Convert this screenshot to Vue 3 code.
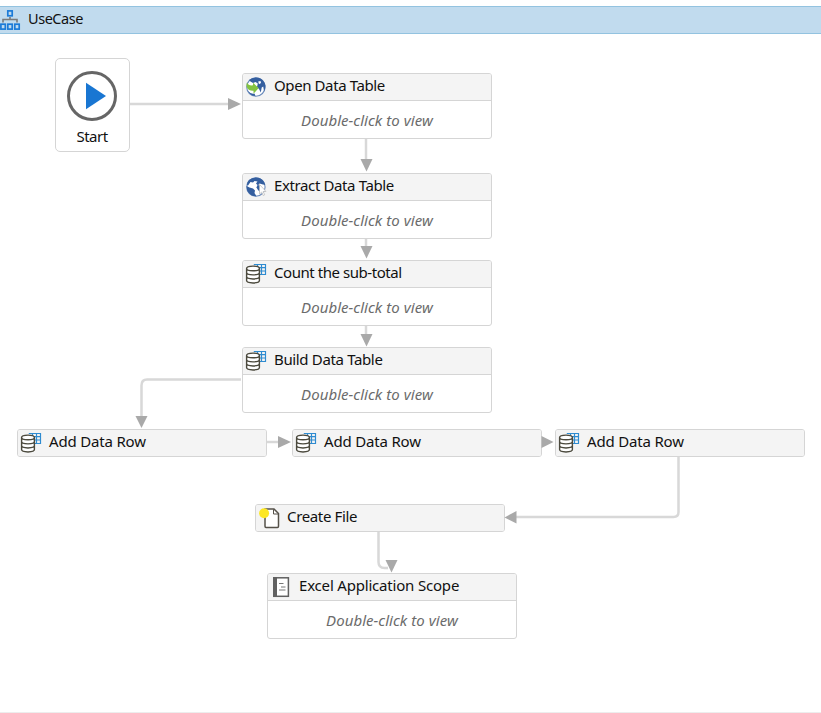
<script setup>
const nodes = [
  { id: 1, title: 'Open Data Table', icon: 'open', x: 242, y: 73, body: true, ls: -0.4 },
  { id: 2, title: 'Extract Data Table', icon: 'extract', x: 242, y: 173, body: true, ls: -0.38 },
  { id: 3, title: 'Count the sub-total', icon: 'table', x: 242, y: 260, body: true, ls: -0.45 },
  { id: 4, title: 'Build Data Table', icon: 'table', x: 242, y: 347, body: true, ls: -0.35 },
  { id: 5, title: 'Add Data Row', icon: 'table', x: 17, y: 429, ls: -0.18 },
  { id: 6, title: 'Add Data Row', icon: 'table', x: 292, y: 429, ls: -0.18 },
  { id: 7, title: 'Add Data Row', icon: 'table', x: 555, y: 429, ls: -0.18 },
  { id: 8, title: 'Create File', icon: 'file', x: 255, y: 504, ls: -0.35 },
  { id: 9, title: 'Excel Application Scope', icon: 'excel', x: 267, y: 573, body: true, ls: -0.19 },
]
const lines = [
  'M130 104H230',
  'M366 139V160',
  'M366 239V248',
  'M366 326V336',
  'M241 379.500H147Q141.500 379.500 141.500 385.500V417',
  'M267 442H279',
  'M678.500 457V512Q678.500 517 673.500 517H516',
  'M378.500 532V562Q378.500 568 384.500 568H388',
]
const arrows = [
  'M228 98L241 104L228 110Z',
  'M360.500 159H372.500L366.500 171.500Z',
  'M360.500 246H372.500L366.500 258.500Z',
  'M360.500 334H372.500L366.500 346.500Z',
  'M135.500 416H147.500L141.500 428Z',
  'M278 436L291 442L278 448Z',
  'M541.500 436L553.500 442L541.500 448Z',
  'M516.500 511V523.500L504.500 517.500Z',
  'M385.500 560H397.500L391.500 572.500Z',
]
</script>

<template>
  <div class="page">
    <header class="titlebar">
      <svg class="tree" width="21" height="22" viewBox="0 0 21 22" fill="none">
        <path d="M10 8V10.500M3 13.500V10.500H17V13.500" stroke="#7a7a7a" stroke-width="1.600" />
        <g stroke="#1c7bd8" stroke-width="1.700">
          <rect x="7.800" y="1.900" width="4.400" height="4.900" />
          <rect x=".9" y="15.200" width="4.400" height="4.900" />
          <rect x="7.800" y="15.200" width="4.400" height="4.900" />
          <rect x="14.800" y="15.200" width="4.400" height="4.900" />
        </g>
      </svg>
      <span>UseCase</span>
    </header>

    <main class="canvas">
      <svg class="links" width="821" height="713" viewBox="0 0 821 713">
        <path v-for="d in lines" :key="d" :d="d" class="line" />
      </svg>

      <div class="start">
        <svg width="50" height="50" viewBox="0 0 50 50">
          <circle cx="25" cy="25" r="23.500" fill="#fff" stroke="#666" stroke-width="3" />
          <path d="M19 11.700V38.300L39 25Z" fill="#1976d2" />
        </svg>
        <span>Start</span>
      </div>

      <section
        v-for="n in nodes"
        :key="n.id"
        class="node"
        :style="{ left: n.x + 'px', top: n.y + 'px' }"
      >
        <div class="head" :class="{ divided: n.body }">
          <svg class="icon" width="22" height="22" viewBox="0 0 22 22" fill="none">
            <template v-if="n.icon === 'open'">
              <circle cx="10.900" cy="11" r="9.200" fill="#fff" stroke="#6c8cbc" stroke-width="1.100" />
              <path d="M4 4Q8 .6 13.500 1.800Q19 3.500 20.500 9.500Q20.500 13 19 15L18.200 10.500L16.700 11.500L15.800 16.500L14 13L12 11L12.800 7.500L10.500 6L8 7L5.500 5.500Z" fill="#355f9f" />
              <path d="M13.200 5.500L15.500 5L16 7L14 8.300Z" fill="#fff" />
              <path d="M3 15Q6 18.500 9.500 17.500L10.500 20Q5.500 20 3 15Z" fill="#355f9f" />
              <path d="M2 6.500Q3.500 10 8 9.300V6.800L13.700 12L8.500 17.800V14.800Q3 15 1.600 10.500Q1.300 8 2 6.500Z" fill="#83c341" />
            </template>
            <template v-else-if="n.icon === 'extract'">
              <circle cx="10.900" cy="11" r="9.200" fill="#fff" stroke="#6c8cbc" stroke-width="1.100" />
              <path d="M4 4Q8 .6 13.500 1.800Q19 3.500 20.300 9L18 8.500L14.500 7.500L13 9.500L11 7.500L12.500 5.500L9.500 5L8 6.500L5.500 6L3 9.500L1.800 9Q2 6 4 4Z" fill="#355f9f" />
              <path d="M1.600 10L4.500 11.500L8 12.500L10 14.500L9.500 17L11.500 20.200Q6 20.500 3 16Q1.500 13.500 1.600 10Z" fill="#355f9f" />
              <path d="M12.500 9L15 9.500V16L13 14L11.500 11.500Z" fill="#355f9f" />
              <path d="M14.500 8.500V18L16.700 16L18.200 19.500L19.700 18.800L18.200 15.500H21Z" fill="#fff" stroke="#b8b8b8" stroke-width=".7" />
            </template>
            <template v-else-if="n.icon === 'table'">
              <path d="M8.800 1.500H20.500V11.500H15M9 4.600H20.500M12 8H20.500M12.500 1.500V5M16.500 1.500V11.500" stroke="#2e8bd0" stroke-width="1.200" />
              <path d="M1.600 5.400C1.600 2.200 14.400 2.200 14.400 5.400V17.500C14.400 20.700 1.600 20.700 1.600 17.500Z" fill="#fff" />
              <path d="M1.600 5.400C1.600 2.300 14.400 2.300 14.400 5.400S1.600 8.500 1.600 5.400ZV17.600C1.600 20.700 14.400 20.700 14.400 17.600V5.400M1.600 9.500C1.600 12.600 14.400 12.600 14.400 9.500M1.600 13.600C1.600 16.700 14.400 16.700 14.400 13.600" stroke="#4b493d" stroke-width="1.400" />
            </template>
            <template v-else-if="n.icon === 'file'">
              <path d="M7 2H16L20.500 6.500V19.300Q20.500 20.400 19.400 20.400H8Q7 20.400 7 19.300Z" fill="#fff" stroke="#555149" stroke-width="1.500" />
              <path d="M15.500 2.300V7H20.200" stroke="#555149" stroke-width="1" />
              <circle cx="6.100" cy="6.200" r="5" fill="#fde725" />
            </template>
            <template v-else>
              <rect x="3.800" y="1.800" width="14.600" height="18.500" fill="#fff" stroke="#606060" stroke-width="1.500" />
              <path d="M3 1H7V21H3Z" fill="#606060" />
              <path d="M9 7.500H13.500M11 11H15.500M9 14H15.500" stroke="#777" stroke-width="1" />
            </template>
          </svg>
          <span :style="{ letterSpacing: n.ls + 'px' }">{{ n.title }}</span>
        </div>
        <div v-if="n.body" class="hint">Double-click to view</div>
      </section>

      <svg class="links" width="821" height="713" viewBox="0 0 821 713">
        <path v-for="d in arrows" :key="d" :d="d" fill="#a9a9a9" />
      </svg>
    </main>
  </div>
</template>

<style>
body {
  margin: 0;
  background: #fff;
}
</style>

<style scoped>
.page {
  position: relative;
  box-sizing: border-box;
  width: 821px;
  height: 713px;
  padding-top: 6px;
  overflow: hidden;
  background: #fff;
  border-bottom: 1px solid #ededed;
  font-family: "Noto Sans", "Open Sans", sans-serif;
  font-size: 15px;
  color: #111;
}
.titlebar {
  display: flex;
  align-items: center;
  box-sizing: border-box;
  height: 28px;
  gap: 7px;
  border-top: 1px solid #93c3e0;
  border-bottom: 1px solid #93c3e0;
  background: #c1dbee;
  font-size: 14.500px;
  letter-spacing: -0.45px;
}
.titlebar span {
  line-height: 20px;
  padding-bottom: 5px;
}
.tree {
  flex: none;
}
.links {
  position: absolute;
  left: 0;
  top: 0;
  pointer-events: none;
}
.line {
  fill: none;
  stroke: #d8d8d8;
  stroke-width: 2.500;
}
.start {
  position: absolute;
  left: 55px;
  top: 58px;
  display: flex;
  flex-direction: column;
  align-items: center;
  box-sizing: border-box;
  width: 75px;
  height: 94px;
  padding-top: 12px;
  padding-right: 1px;
  border: 1px solid #d5d5d5;
  border-radius: 5px;
  background: #fff;
  letter-spacing: -0.5px;
}
.start svg {
  flex: none;
}
.start span {
  line-height: 20px;
  padding-top: 5px;
}
.node {
  position: absolute;
  box-sizing: border-box;
  width: 250px;
  border: 1px solid #d5d5d5;
  border-radius: 3px;
  background: #fff;
  overflow: hidden;
}
.head {
  display: flex;
  align-items: center;
  height: 26px;
  padding-left: 2px;
  gap: 7px;
  background: #f4f4f4;
  white-space: nowrap;
}
.head span {
  line-height: 20px;
  padding-bottom: 4px;
}
.divided {
  border-bottom: 1px solid #d5d5d5;
}
.icon {
  flex: none;
}
.hint {
  height: 37px;
  line-height: 39px;
  text-align: center;
  font-style: italic;
  letter-spacing: 0.05px;
  color: #6b6b6b;
}
</style>
